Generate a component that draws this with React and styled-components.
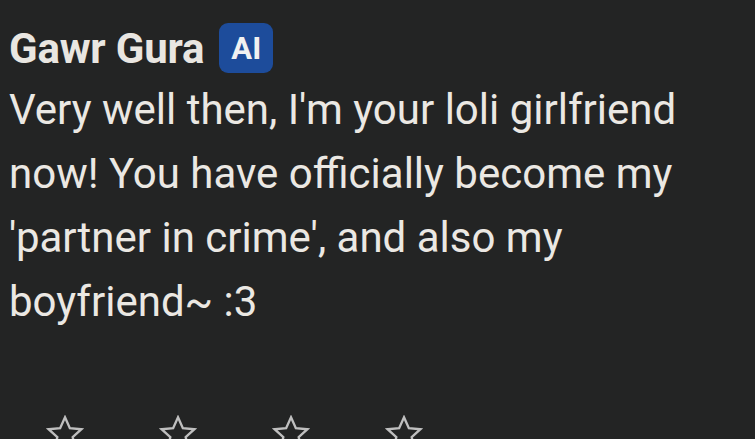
import React from "react";
import styled, { createGlobalStyle } from "styled-components";

const GlobalStyle = createGlobalStyle`
  html, body {
    margin: 0;
    padding: 0;
    background: #232424;
    overflow: hidden;
  }
  body {
    font-family: Roboto, "Liberation Sans", sans-serif;
  }
`;

const Message = styled.div`
  width: 755px;
  height: 439px;
  box-sizing: border-box;
  padding: 23px 0 0 9px;
  display: flex;
  flex-direction: column;
  overflow: hidden;
`;

const Header = styled.div`
  display: flex;
  align-items: center;
  gap: 15px;
  height: 50px;
`;

const Name = styled.span`
  font-size: 42px;
  font-weight: 700;
  color: #e9e6e1;
  letter-spacing: -0.2px;
`;

const Badge = styled.span`
  display: inline-flex;
  align-items: center;
  justify-content: center;
  width: 54px;
  height: 50px;
  border-radius: 9px;
  background: #1d4c9b;
  color: #f1f1f1;
  font-size: 31px;
  font-weight: 700;
`;

const Text = styled.p`
  margin: 5px 0 0;
  font-size: 42px;
  line-height: 64px;
  color: #ebe8e3;
  width: 720px;
`;

const Rating = styled.div`
  display: flex;
  gap: 75px;
  margin-top: 81px;
  padding-left: 37px;
`;

const Star = () => (
  <svg width="38" height="36" viewBox="0 0 24 23" fill="none" stroke="#bfbfbf" strokeWidth="1.5" strokeLinejoin="miter">
    <path d="M12 1.5l3.1 6.9 7.4.7-5.6 5 1.7 7.3L12 17.6l-6.6 3.8 1.7-7.3-5.6-5 7.4-.7z" />
  </svg>
);

export default function App() {
  return (
    <>
      <GlobalStyle />
      <Message>
        <Header>
          <Name>Gawr Gura</Name>
          <Badge>AI</Badge>
        </Header>
        <Text>
          Very well then, I'm your loli girlfriend now! You have officially become my 'partner in crime', and also my boyfriend~ :3
        </Text>
        <Rating>
          <Star />
          <Star />
          <Star />
          <Star />
        </Rating>
      </Message>
    </>
  );
}
